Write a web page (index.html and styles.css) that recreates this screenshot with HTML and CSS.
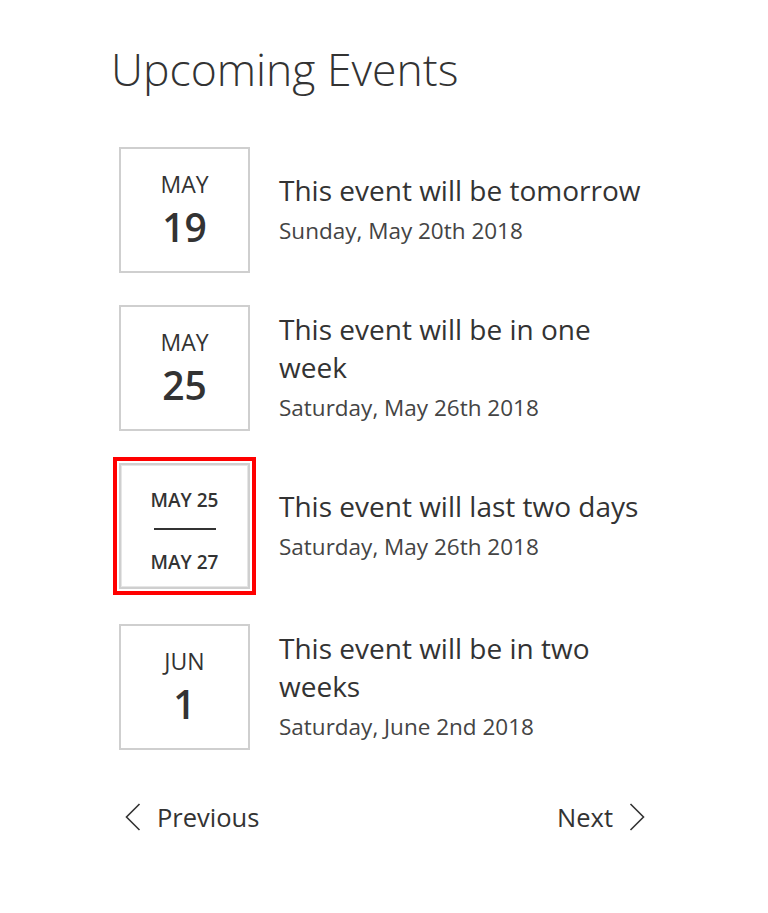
FILE: index.html
```html
<!DOCTYPE html>
<html lang="en">
<head>
<meta charset="utf-8">
<title>Upcoming Events</title>
<link rel="stylesheet" href="styles.css">
</head>
<body>
<main class="events">
  <h1 class="events-title">Upcoming Events</h1>
  <ul class="event-list">
    <li class="event">
      <div class="date-box">
        <span class="month">MAY</span>
        <span class="day">19</span>
      </div>
      <div class="event-info">
        <div class="event-name">This event will be tomorrow</div>
        <div class="event-date">Sunday, May 20th 2018</div>
      </div>
    </li>
    <li class="event">
      <div class="date-box">
        <span class="month">MAY</span>
        <span class="day">25</span>
      </div>
      <div class="event-info">
        <div class="event-name">This event will be in one week</div>
        <div class="event-date">Saturday, May 26th 2018</div>
      </div>
    </li>
    <li class="event is-selected">
      <div class="date-box range selected">
        <span class="range-date">MAY 25</span>
        <span class="range-sep"></span>
        <span class="range-date">MAY 27</span>
      </div>
      <div class="event-info">
        <div class="event-name">This event will last two days</div>
        <div class="event-date">Saturday, May 26th 2018</div>
      </div>
    </li>
    <li class="event">
      <div class="date-box">
        <span class="month">JUN</span>
        <span class="day">1</span>
      </div>
      <div class="event-info">
        <div class="event-name">This event will be in two weeks</div>
        <div class="event-date">Saturday, June 2nd 2018</div>
      </div>
    </li>
  </ul>
  <nav class="pager">
    <a class="pager-link" href="#">
      <svg class="chev" width="16" height="28" viewBox="0 0 16 28"><polyline points="14.5,1 1.5,14 14.5,27" fill="none" stroke="#333" stroke-width="1.6"/></svg>
      <span>Previous</span>
    </a>
    <a class="pager-link" href="#">
      <span>Next</span>
      <svg class="chev" width="16" height="28" viewBox="0 0 16 28"><polyline points="1.5,1 14.5,14 1.5,27" fill="none" stroke="#333" stroke-width="1.6"/></svg>
    </a>
  </nav>
</main>
</body>
</html>
```
FILE: styles.css
```css
html, body {
  margin: 0;
  padding: 0;
  background: #fff;
}
body {
  font-family: "Open Sans", "Noto Sans", "DejaVu Sans", sans-serif;
  color: #333;
}
.events {
  width: 538px;
  padding: 41px 0 0 111px;
}
.events-title {
  margin: 0 0 50px 0;
  font-size: 44.5px;
  font-weight: 300;
  line-height: 56px;
  color: #333;
}
.event-list {
  list-style: none;
  margin: 0 0 0 8px;
  padding: 0;
  display: flex;
  flex-direction: column;
  gap: 32px;
}
.event {
  display: flex;
  align-items: center;
  gap: 29px;
}
.event.is-selected {
  margin-bottom: 3px;
}
.date-box {
  box-sizing: border-box;
  flex: 0 0 131px;
  width: 131px;
  height: 126px;
  border: 2px solid #cfcfcf;
  display: flex;
  flex-direction: column;
  align-items: center;
  justify-content: center;
  color: #333;
}
.month {
  font-size: 23px;
  line-height: 34px;
}
.day {
  font-size: 39px;
  font-weight: 600;
  line-height: 52px;
}
.date-box.selected {
  outline: 4px solid #f00;
  outline-offset: 2px;
  box-shadow: inset 0 0 0 1px #e6e6e6;
  padding-top: 9px;
}
.range-date {
  font-size: 19px;
  font-weight: 600;
  line-height: 24px;
}
.range-sep {
  width: 62px;
  height: 2px;
  background: #333;
  margin: 16px 0 20px;
}
.event-info {
  width: 372px;
  padding-top: 3px;
}
.event-name {
  font-size: 28px;
  line-height: 38px;
  color: #333;
}
.event-date {
  font-size: 22.5px;
  line-height: 44px;
  color: #444;
}
.pager {
  display: flex;
  justify-content: space-between;
  align-items: center;
  margin: 50px 0 0 14px;
  width: 520px;
}
.pager-link {
  display: flex;
  align-items: center;
  gap: 16px;
  font-size: 25.5px;
  color: #333;
  text-decoration: none;
}
.chev {
  display: block;
}
```
